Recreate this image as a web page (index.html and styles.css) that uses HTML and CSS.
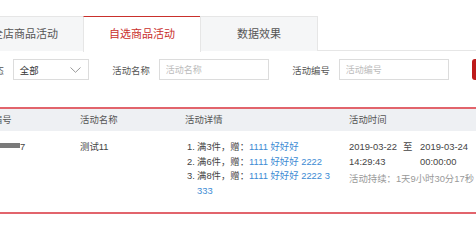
FILE: index.html
```html
<!DOCTYPE html>
<html lang="zh-CN">
<head>
    <meta charset="UTF-8">
    <title>自选商品活动</title>
    <link rel="stylesheet" href="styles.css">
</head>
<body>
    <div class="page">
        <div class="tabs">
            <div class="tab">全店商品活动</div>
            <div class="tab active">自选商品活动</div>
            <div class="tab">数据效果</div>
        </div>

        <div class="filters">
            <div class="field">
                <span class="label">状态</span>
                <div class="select">
                    <span>全部</span>
                    <svg class="chevron" width="11" height="6" viewBox="0 0 11 6"><path d="M0.5 0.5 L5.5 5.3 L10.5 0.5" fill="none" stroke="#999" stroke-width="1"/></svg>
                </div>
            </div>
            <div class="field">
                <span class="label">活动名称</span>
                <input class="input" type="text" placeholder="活动名称">
            </div>
            <div class="field">
                <span class="label">活动编号</span>
                <input class="input" type="text" placeholder="活动编号">
            </div>
            <button class="search-btn">查询</button>
        </div>

        <div class="table">
            <div class="row head">
                <div class="cell">活动编号</div>
                <div class="cell">活动名称</div>
                <div class="cell">活动详情</div>
                <div class="cell">活动时间</div>
            </div>
            <div class="row body">
                <div class="cell"><span class="masked"></span>7</div>
                <div class="cell">测试11</div>
                <div class="cell detail">
                    <div class="rule"><span class="num">1.</span><span>满3件，赠：<span class="link">1111 好好好</span></span></div>
                    <div class="rule"><span class="num">2.</span><span>满6件，赠：<span class="link">1111 好好好 2222</span></span></div>
                    <div class="rule"><span class="num">3.</span><span>满8件，赠：<span class="link">1111 好好好 2222 3333</span></span></div>
                </div>
                <div class="cell">
                    <div class="period">
                        <span class="start">2019-03-22<br>14:29:43</span>
                        <span class="to">至</span>
                        <span>2019-03-24<br>00:00:00</span>
                    </div>
                    <div class="duration">活动持续：1天9小时30分17秒</div>
                </div>
            </div>
        </div>
    </div>
</body>
</html>
```

FILE: styles.css
```css
body {
    margin: 0;
    background: #fff;
    overflow: hidden;
    font-family: 'Liberation Sans', 'Noto Sans CJK SC', sans-serif;
    color: #333;
}

.page {
    width: 600px;
    margin-left: -40px;
    padding-top: 16px;
}

/* tabs */
.tabs {
    display: flex;
    padding-left: 7px;
    border-bottom: 1px solid #e6e6e6;
    height: 34px;
}
.tab {
    width: 116px;
    height: 34px;
    line-height: 34px;
    text-align: center;
    font-size: 11px;
    color: #555;
    background: #f5f6f7;
    border: 1px solid #e6e6e6;
    border-bottom: none;
    margin-left: -1px;
}
.tab.active {
    background: #fff;
    color: #c9302c;
    border-top: 1px solid #c9302c;
    height: 35px;
}

/* filters */
.filters {
    display: flex;
    align-items: center;
    padding-left: 25px;
    margin-top: 8px;
}
.field {
    display: flex;
    align-items: center;
    gap: 9px;
    margin-right: 23.5px;
}
.label {
    font-size: 9.4px;
    color: #555;
}
.select {
    height: 19px;
    border: 1px solid #dcdcdc;
    display: flex;
    align-items: center;
    justify-content: space-between;
    padding: 0 7px 0 6px;
    font-size: 9.4px;
    color: #333;
    width: 61px;
}
.input {
    width: 110px;
    height: 21px;
    box-sizing: border-box;
    border: 1px solid #dcdcdc;
    padding: 0 6px;
    font-family: inherit;
    font-size: 9px;
    color: #333;
    outline: none;
}
.input::placeholder {
    color: #bbb;
}
.search-btn {
    height: 21px;
    width: 50px;
    border: none;
    border-radius: 3px;
    background: #bd1a1a;
    color: #fff;
    font-size: 9.4px;
}

/* table */
.table {
    margin-top: 27px;
    border-top: 2px solid #e2646c;
    border-bottom: 2px solid #e2646c;
    font-size: 9.4px;
}
.row {
    display: grid;
    grid-template-columns: 106px 105px 164px 1fr;
    padding-left: 14px;
}
.row.head {
    background: #eef0f3;
    height: 22px;
    line-height: 22px;
    color: #555;
}
.row.body {
    padding-top: 9px;
    padding-bottom: 14px;
    line-height: 14.5px;
    color: #444;
}
.masked {
    display: inline-block;
    width: 46px;
    height: 5px;
    background: #7a7a7a;
    filter: blur(0.6px);
    vertical-align: 2px;
}
.detail {
    padding-right: 16px;
}
.rule {
    display: flex;
    word-break: break-all;
}
.num {
    flex: none;
    width: 12px;
    padding-left: 2px;
    box-sizing: border-box;
}
.link {
    color: #3b8bd4;
}
.period {
    display: flex;
}
.start {
    width: 54px;
}
.to {
    width: 17px;
}
.duration {
    margin-top: 3px;
    color: #999;
}
```
